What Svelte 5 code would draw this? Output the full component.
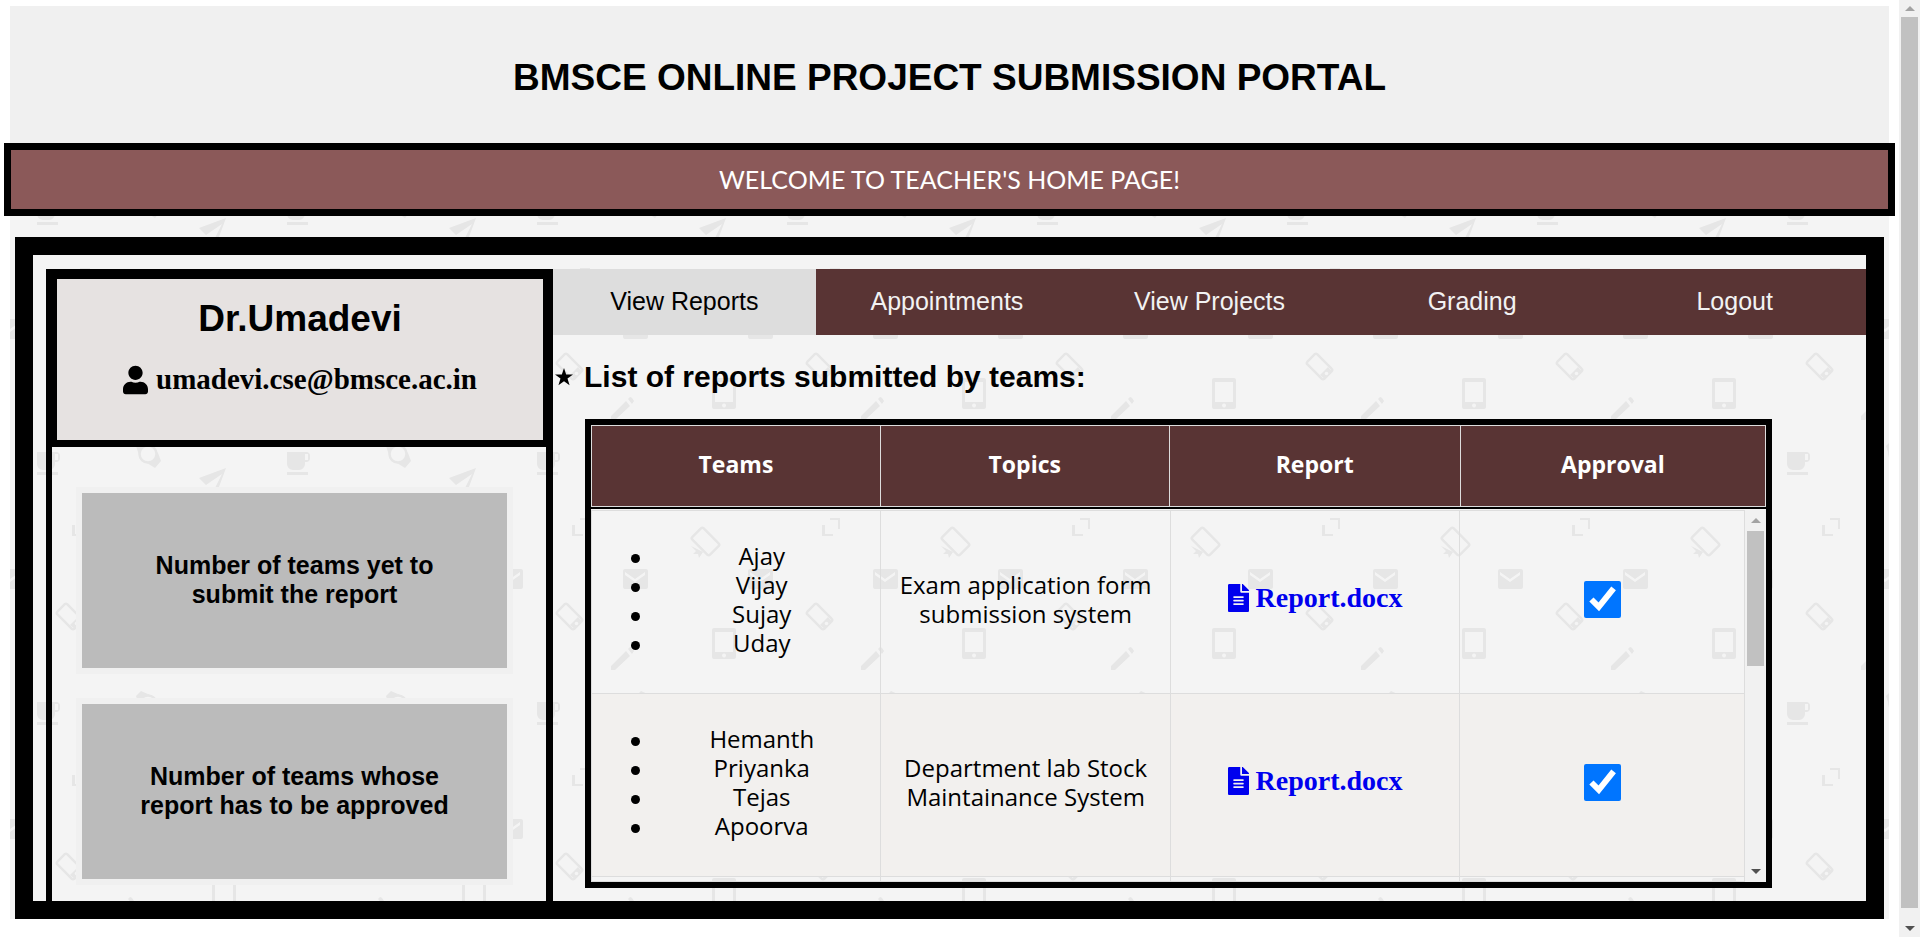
<script>
  const tabs = ['View Reports', 'Appointments', 'View Projects', 'Grading', 'Logout'];
  let active = $state('View Reports');

  const counters = [
    'Number of teams yet to submit the report',
    'Number of teams whose report has to be approved'
  ];

  let reports = $state([
    {
      team: ['Ajay', 'Vijay', 'Sujay', 'Uday'],
      topic: 'Exam application form submission system',
      file: 'Report.docx',
      approved: true
    },
    {
      team: ['Hemanth', 'Priyanka', 'Tejas', 'Apoorva'],
      topic: 'Department lab Stock Maintainance System',
      file: 'Report.docx',
      approved: true
    }
  ]);
</script>

{#snippet scrollbar(kind)}
  <div class="scrollbar {kind}" aria-hidden="true">
    <svg class="arrow up" viewBox="0 0 10 5"><path d="M5 0 10 5H0z" /></svg>
    <div class="track"><div class="thumb"></div></div>
    <svg class="arrow down" viewBox="0 0 10 5"><path d="M0 0H10L5 5z" /></svg>
  </div>
{/snippet}

<div class="window">
  <div class="page">
    <div class="portal">
      <header class="title"><h1>BMSCE ONLINE PROJECT SUBMISSION PORTAL</h1></header>
      <p class="banner">WELCOME TO TEACHER'S HOME PAGE!</p>

      <div class="frame">
        <aside class="sidebar">
          <section class="profile">
            <h2>Dr.Umadevi</h2>
            <p class="email">
              <svg viewBox="0 0 448 512" aria-hidden="true"><path d="M224 256c70.7 0 128-57.3 128-128S294.7 0 224 0 96 57.3 96 128s57.3 128 128 128zm89.6 32h-16.7c-22.2 10.2-46.9 16-72.9 16s-50.6-5.8-72.9-16h-16.7C60.2 288 0 348.2 0 422.4V464c0 26.5 21.5 48 48 48h352c26.5 0 48-21.5 48-48v-41.6c0-74.2-60.2-134.4-134.4-134.4z" /></svg>
              <span>umadevi.cse@bmsce.ac.in</span>
            </p>
          </section>
          <div class="counters">
            {#each counters as label}
              <section class="counter"><h3>{label}</h3></section>
            {/each}
          </div>
        </aside>

        <main>
          <nav>
            {#each tabs as tab}
              <button type="button" class:active={active === tab} onclick={() => (active = tab)}>{tab}</button>
            {/each}
          </nav>

          <h2 class="list-title">
            <svg viewBox="0 0 20 20" aria-hidden="true"><path d="M10 0l2.4 7.2H20l-6.1 4.6 2.3 7.4L10 14.7l-6.2 4.5 2.3-7.4L0 7.2h7.6z" /></svg>
            <span>List of reports submitted by teams:</span>
          </h2>

          <div class="reports">
            <table class="head">
              <thead>
                <tr><th>Teams</th><th>Topics</th><th>Report</th><th>Approval</th></tr>
              </thead>
            </table>
            <div class="body">
              <table>
                <tbody>
                  {#each reports as report, i}
                    <tr>
                      <td>
                        <ul>
                          {#each report.team as member}<li><span>{member}</span></li>{/each}
                        </ul>
                      </td>
                      <td>{report.topic}</td>
                      <td>
                        <a href="#report-{i + 1}">
                          <svg viewBox="0 0 384 512" aria-hidden="true"><path d="M224 136V0H24C10.7 0 0 10.7 0 24v464c0 13.3 10.7 24 24 24h336c13.3 0 24-10.7 24-24V160H248c-13.2 0-24-10.8-24-24zm64 236c0 6.6-5.4 12-12 12H108c-6.6 0-12-5.4-12-12v-8c0-6.6 5.4-12 12-12h168c6.6 0 12 5.4 12 12v8zm0-64c0 6.6-5.4 12-12 12H108c-6.6 0-12-5.4-12-12v-8c0-6.6 5.4-12 12-12h168c6.6 0 12 5.4 12 12v8zm0-72v8c0 6.6-5.4 12-12 12H108c-6.6 0-12-5.4-12-12v-8c0-6.6 5.4-12 12-12h168c6.6 0 12 5.4 12 12zm96-114.1v6.1H256V0h6.1c6.4 0 12.5 2.5 17 7l97.9 98c4.5 4.5 7 10.6 7 16.9z" /></svg>
                          <span>{report.file}</span>
                        </a>
                      </td>
                      <td><input type="checkbox" aria-label="Approval" bind:checked={report.approved} /></td>
                    </tr>
                  {/each}
                  <tr class="next"><td></td><td></td><td></td><td></td></tr>
                </tbody>
              </table>
              {@render scrollbar('inner')}
            </div>
          </div>
        </main>
      </div>
    </div>
  </div>
  {@render scrollbar('outer')}
</div>

<style>
  :global(body) {
    background: #fff;
    color: #000;
    font-family: Arial, 'Liberation Sans', sans-serif;
    font-size: 25px;
    line-height: 29px;
  }

  h1, h2, h3, p, ul {
    margin: 0;
  }

  .window {
    display: flex;
    min-height: 100vh;
  }

  .page {
    flex: 1;
    min-width: 0;
    padding: 6px 10px 18px;
  }

  .portal {
    background: #f4f4f4 url("data:image/svg+xml,%3Csvg xmlns='http://www.w3.org/2000/svg' width='250' height='250'%3E%3Cg fill='%23e6e6e6'%3E%3Cpath d='M27 196h19a4 4 0 0 1 4 4v2a4 4 0 0 1-4 4h-1v2a6 6 0 0 1-6 6h-6a6 6 0 0 1-6-6zM45 198v6h3v-6zM27 216h21v3H27z'/%3E%3Cpath d='M189 222l27-10-10 27-4-1 10-20-16 11z'/%3E%3Cpath d='M70 12h10v11h-2v-9h-8zM62 19h3v9h8v2H62z'/%3E%3Cpath d='M113 65a2 2 0 0 1 2-2h21a2 2 0 0 1 2 2v16a2 2 0 0 1-2 2h-21a2 2 0 0 1-2-2zM115 66v3l10 7 10-7v-3l-10 7z' fill-rule='evenodd'/%3E%3Cpath d='M-12 65a2 2 0 0 1 2-2h21a2 2 0 0 1 2 2v16a2 2 0 0 1-2 2h-21a2 2 0 0 1-2-2zM-10 66v3l10 7 10-7v-3L0 73z' fill-rule='evenodd'/%3E%3Cpath d='M238 65a2 2 0 0 1 2-2h21v20h-21a2 2 0 0 1-2-2zM240 66v3l10 7 10-7v-3l-10 7z' fill-rule='evenodd'/%3E%3Cpath d='M101 160l15-15 4 5-15 14h-4zM118 143l2-2q2 0 4 4l-2 3z'/%3E%3Cpath d='M204 122h20a2 2 0 0 1 2 2v27a2 2 0 0 1-2 2h-20a2 2 0 0 1-2-2v-27a2 2 0 0 1 2-2zM205 126v20h18v-20zM214 147.500a2 2 0 1 0 .1 0z' fill-rule='evenodd'/%3E%3Cpath d='M181 40l5 5-3 3 5 0 1 4 4-6z'/%3E%3Cpath d='M126 190l5-5 9 4 8 8 3 8-6 7-8-5-8-8z'/%3E%3C/g%3E%3Ccircle cx='138' cy='198' r='8.500' fill='%23f4f4f4' stroke='%23e6e6e6' stroke-width='2.500'/%3E%3Cg fill='none' stroke='%23e6e6e6' stroke-width='2.500'%3E%3Crect x='-12' y='-7' width='24' height='14' rx='2' transform='translate(59.500 110.500) rotate(45)'/%3E%3Crect x='-12.500' y='-8' width='25' height='16' rx='2' transform='translate(195.500 35.500) rotate(45)'/%3E%3C/g%3E%3Cpath d='M68 111l4 5-7 7-5-4z' fill='%23e6e6e6'/%3E%3Ccircle cx='66.500' cy='117.500' r='1.800' fill='%23f4f4f4'/%3E%3C/svg%3E");
  }

  .title {
    display: grid;
    place-items: center;
    min-height: 137px;
    background: #f0f0f0;
  }

  .title h1 {
    padding-top: 6px;
    font-size: 37px;
    line-height: 43px;
  }

  .banner {
    margin: 0 -6px;
    padding: 15px;
    border: 7px solid #000;
    background: #8b5959;
    color: #fff;
    font-family: 'Comic Sans MS', Lato, sans-serif;
    text-align: center;
  }

  .frame {
    display: grid;
    grid-template-columns: 27.86% 1fr;
    margin: 21px 5px 0;
    padding: 14px 0 0 13px;
    border: 18px solid #000;
  }

  .sidebar {
    border: solid #000;
    border-width: 6px 7px 0 6px;
  }

  .profile {
    padding: 18px 0 44px;
    border: solid #000;
    border-width: 4px 3px 7px 5px;
    background: #e6e2e1;
    text-align: center;
  }

  .profile h2 {
    font-size: 37px;
    line-height: 43px;
  }

  .email {
    display: flex;
    justify-content: center;
    align-items: center;
    gap: 8px;
    margin-top: 23px;
    font-family: 'Times New Roman', 'Liberation Serif', serif;
    font-size: 29px;
    font-weight: bold;
    line-height: 33px;
  }

  .email svg {
    width: 25px;
    height: 30px;
  }

  .counters {
    display: grid;
    gap: 24px;
    padding: 40px 33px 16px 24px;
  }

  .counter {
    display: grid;
    place-items: center;
    min-height: 175px;
    border: 6px solid #f0f0f0;
    background: #bbb;
    text-align: center;
  }

  .counter h3 {
    max-width: 325px;
    padding-bottom: 2px;
    font-size: 25px;
  }

  nav {
    display: grid;
    grid-template-columns: repeat(5, 1fr);
    background: #593434;
  }

  nav button {
    padding: 18px 0 19px;
    border: 0;
    background: none;
    color: #f2f2f2;
    font: inherit;
    cursor: pointer;
  }

  nav button.active {
    background: #ddd;
    color: #000;
  }

  .list-title {
    display: flex;
    align-items: center;
    gap: 11px;
    padding: 24px 0 25px 2px;
    font-size: 30px;
    line-height: 35px;
  }

  .list-title svg {
    width: 18px;
    height: 18px;
  }

  .reports {
    margin: 0 94px 13px 32px;
    border: 6px solid #000;
    font-family: 'Trebuchet MS', 'Open Sans', sans-serif;
    font-size: 24px;
  }

  table {
    width: 100%;
    border-collapse: collapse;
    table-layout: fixed;
    text-align: center;
  }

  .head {
    background: #593434;
    color: #fff;
  }

  th, td {
    box-sizing: border-box;
    border: 1px solid #ddd;
  }

  th {
    padding: 24px 8px 27px;
    font-size: 23px;
  }

  th:nth-child(-n + 2) {
    width: 24.6%;
  }

  th:nth-child(3) {
    width: 24.8%;
  }

  .body {
    display: flex;
    padding-top: 1px;
    border-top: 2px solid #000;
  }

  td {
    padding: 5px 16px 11px;
  }

  td:nth-child(-n + 3) {
    width: 25.1%;
  }

  tr:nth-child(even) {
    background: #f2f0ee;
  }

  td ul {
    margin: 0 -16px;
    padding: 25px 0 25px 39px;
    list-style: none;
  }

  li {
    display: flex;
    align-items: center;
    gap: 3px;
  }

  li::before {
    flex: none;
    width: 9px;
    height: 9px;
    margin-top: 6px;
    border-radius: 50%;
    background: #000;
    content: '';
  }

  li span {
    flex: 1;
  }

  .next td {
    padding: 2px;
  }

  td a {
    display: inline-flex;
    align-items: center;
    gap: 7px;
    color: #00e;
    font-family: 'Times New Roman', 'Liberation Serif', serif;
    font-size: 28px;
    font-weight: bold;
    line-height: 33px;
    text-decoration: none;
  }

  td a svg {
    width: 21px;
    height: 28px;
    fill: currentColor;
  }

  input {
    width: 37px;
    height: 37px;
    margin: 0;
    vertical-align: middle;
  }

  .scrollbar {
    display: flex;
    flex: 0 0 21px;
    flex-direction: column;
    align-items: center;
    background: #f1f1f1;
  }

  .arrow {
    flex: none;
    width: 10px;
    height: 5px;
    padding: 6px 0;
  }

  .inner .arrow {
    padding: 8px 0;
  }

  .up {
    fill: #a3a3a3;
  }

  .down {
    fill: #505050;
  }

  .track {
    flex: 1;
    width: 17px;
  }

  .thumb {
    height: 41%;
    background: #c1c1c1;
  }

  .outer .thumb {
    height: 98.7%;
  }
</style>
